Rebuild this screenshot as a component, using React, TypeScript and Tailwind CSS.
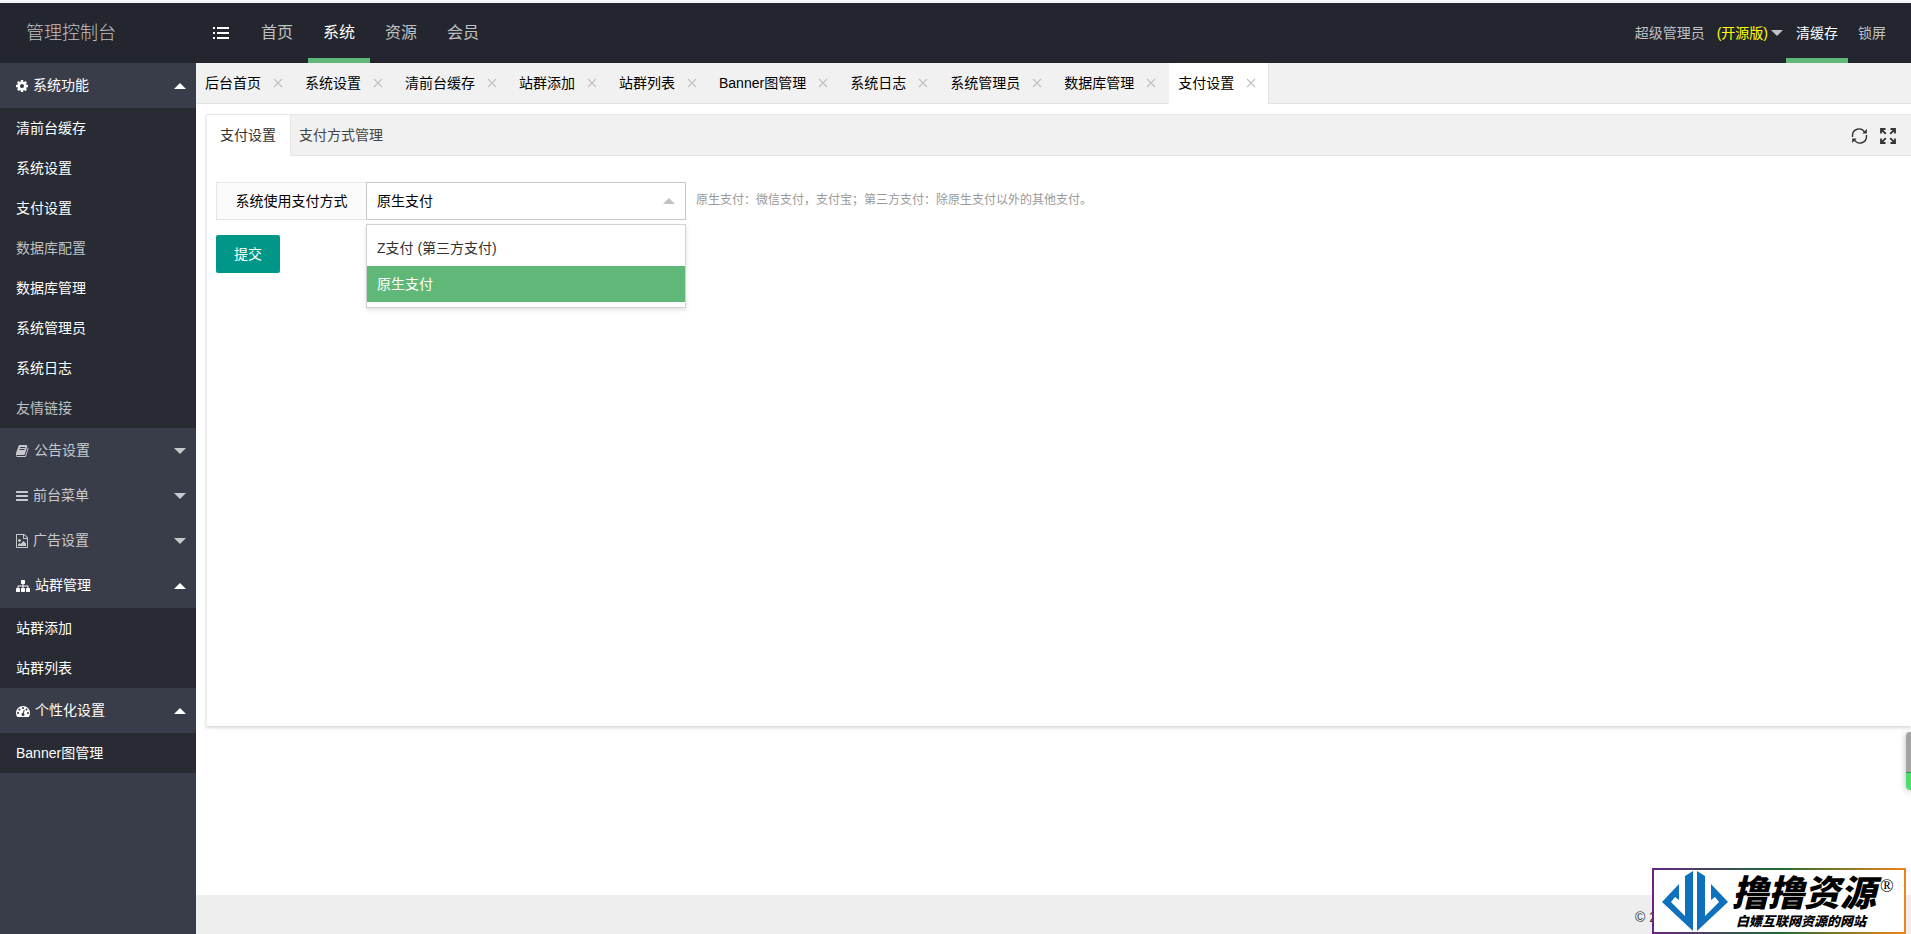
import React, { useState } from 'react';
import clsx from 'clsx';

interface IconDef {
  viewBox: string;
  width: string;
  path: string;
}

const icons: Record<string, IconDef> = {
  cog: {
    viewBox: '128 0 1536 1792',
    width: 'w-3',
    path: 'M1152 896q0-106-75-181t-181-75-181 75-75 181 75 181 181 75 181-75 75-181zm512-109v222q0 12-8 23t-20 13l-185 28q-19 54-39 91 35 50 107 138 10 12 10 25t-9 23q-27 37-99 108t-94 71q-12 0-26-9l-138-108q-44 23-91 38-16 136-29 186-7 28-36 28h-222q-14 0-24.500-8.500t-11.500-21.500l-28-184q-49-16-90-37l-141 107q-10 9-25 9-14 0-25-11-126-114-165-168-7-10-7-23 0-12 8-23 15-21 51-66.500t54-70.500q-27-50-41-99l-183-27q-13-2-21-12.500t-8-23.500v-222q0-12 8-23t19-13l186-28q14-46 39-92-40-57-107-138-10-12-10-24 0-10 9-23 26-36 98.500-107.500t94.500-71.500q13 0 26 10l138 107q44-23 91-38 16-136 29-186 7-28 36-28h222q14 0 24.500 8.500t11.500 21.500l28 184q49 16 90 37l142-107q9-9 24-9 13 0 25 10 129 119 165 170 7 8 7 22 0 12-8 23-15 21-51 66.500t-54 70.500q26 50 41 98l183 28q13 2 21 12.500t8 23.500z',
  },
  book: {
    viewBox: '64 0 1664 1792',
    width: 'w-[13px]',
    path: 'M1639 478q40 57 18 129l-275 906q-19 64-76.500 107.500t-122.500 43.500h-923q-77 0-148.500-53.500t-99.500-131.500q-24-67-2-127 0-4 3-27t4-37q1-8-3-21.500t-3-19.500q2-11 8-21t16.500-23.500 16.500-23.500q23-38 45-91.500t30-91.500q3-10 .5-30t-.5-28q3-11 17-28t17-23q21-36 42-92t25-90q1-9-2.500-32t.5-28q4-13 22-30.500t22-22.500q19-26 42.500-84.500t27.500-96.500q1-8-3-25.500t-2-26.500q2-8 9-18t18-23 17-21q8-12 16.500-30.500t15-35 16-36 19.500-32 26.500-23.500 36-11.500 47.500 5.500l-1 3q38-9 51-9h761q74 0 114 56t18 130l-274 906q-36 119-71.500 153.500t-128.500 34.500h-869q-27 0-38 15-11 16-1 43 24 70 144 70h923q29 0 56-15.500t35-41.500l300-987q7-22 5-57 38 15 59 43zm-1064 2q-4 13 2 22.500t20 9.500h608q13 0 25.500-9.500t16.500-22.500l21-64q4-13-2-22.500t-20-9.500h-608q-13 0-25.500 9.500t-16.500 22.500zm-83 256q-4 13 2 22.500t20 9.500h608q13 0 25.500-9.500t16.500-22.500l21-64q4-13-2-22.500t-20-9.500h-608q-13 0-25.500 9.500t-16.500 22.500z',
  },
  bars: {
    viewBox: '128 0 1536 1792',
    width: 'w-3',
    path: 'M1664 1344v128q0 26-19 45t-45 19h-1408q-26 0-45-19t-19-45v-128q0-26 19-45t45-19h1408q26 0 45 19t19 45zm0-512v128q0 26-19 45t-45 19h-1408q-26 0-45-19t-19-45v-128q0-26 19-45t45-19h1408q26 0 45 19t19 45zm0-512v128q0 26-19 45t-45 19h-1408q-26 0-45-19t-19-45v-128q0-26 19-45t45-19h1408q26 0 45 19t19 45z',
  },
  image: {
    viewBox: '128 0 1536 1792',
    width: 'w-3',
    path: 'M1596 380q28 28 48 76t20 88v1152q0 40-28 68t-68 28h-1344q-40 0-68-28t-28-68v-1600q0-40 28-68t68-28h896q40 0 88 20t76 48zm-444-244v376h376q-10-29-22-41l-313-313q-12-12-41-22zm384 1528v-1024h-416q-40 0-68-28t-28-68v-416h-768v1536h1280zm-128-448v320h-1024v-192l192-192 128 128 384-384zm-832-192q-80 0-136-56t-56-136 56-136 136-56 136 56 56 136-56 136-136 56z',
  },
  sitemap: {
    viewBox: '0 0 1792 1792',
    width: 'w-3.5',
    path: 'M1792 1248v320q0 40-28 68t-68 28h-320q-40 0-68-28t-28-68v-320q0-40 28-68t68-28h96v-192h-512v192h96q40 0 68 28t28 68v320q0 40-28 68t-68 28h-320q-40 0-68-28t-28-68v-320q0-40 28-68t68-28h96v-192h-512v192h96q40 0 68 28t28 68v320q0 40-28 68t-68 28h-320q-40 0-68-28t-28-68v-320q0-40 28-68t68-28h96v-192q0-52 38-90t90-38h512v-192h-96q-40 0-68-28t-28-68v-320q0-40 28-68t68-28h320q40 0 68 28t28 68v320q0 40-28 68t-68 28h-96v192h512q52 0 90 38t38 90v192h96q40 0 68 28t28 68z',
  },
  dashboard: {
    viewBox: '0 0 1792 1792',
    width: 'w-3.5',
    path: 'M384 1152q0-53-37.500-90.500t-90.500-37.500-90.500 37.500-37.500 90.500 37.500 90.500 90.500 37.500 90.500-37.500 37.500-90.500zm192-448q0-53-37.500-90.500t-90.500-37.500-90.500 37.500-37.500 90.500 37.500 90.500 90.500 37.500 90.500-37.500 37.500-90.500zm428 481l101-382q6-26-7.500-48.500t-38.500-29.500-48 6.500-30 39.500l-101 382q-60 5-107 43.500t-63 98.500q-20 77 20 146t117 89 146-20 89-117q16-60-6-117t-72-91zm660-33q0-53-37.500-90.500t-90.500-37.500-90.500 37.500-37.500 90.500 37.500 90.500 90.500 37.500 90.500-37.500 37.500-90.500zm-640-640q0-53-37.500-90.500t-90.500-37.500-90.500 37.500-37.500 90.500 37.500 90.500 90.500 37.500 90.500-37.500 37.500-90.500zm448 192q0-53-37.500-90.500t-90.500-37.500-90.500 37.500-37.500 90.500 37.500 90.500 90.500 37.500 90.500-37.500 37.500-90.500zm320 448q0 261-141 483-19 29-54 29h-1402q-35 0-54-29-141-221-141-483 0-182 71-348t191-286 286-191 348-71 348 71 286 191 191 286 71 348z',
  },
};

interface MenuGroup {
  title: string;
  icon: string;
  open: boolean;
  items: { label: string; dim?: boolean }[];
}

const menu: MenuGroup[] = [
  {
    title: '系统功能',
    icon: 'cog',
    open: true,
    items: [
      { label: '清前台缓存' },
      { label: '系统设置' },
      { label: '支付设置' },
      { label: '数据库配置', dim: true },
      { label: '数据库管理' },
      { label: '系统管理员' },
      { label: '系统日志' },
      { label: '友情链接', dim: true },
    ],
  },
  { title: '公告设置', icon: 'book', open: false, items: [] },
  { title: '前台菜单', icon: 'bars', open: false, items: [] },
  { title: '广告设置', icon: 'image', open: false, items: [] },
  { title: '站群管理', icon: 'sitemap', open: true, items: [{ label: '站群添加' }, { label: '站群列表' }] },
  { title: '个性化设置', icon: 'dashboard', open: true, items: [{ label: 'Banner图管理' }] },
];

const topNav = ['首页', '系统', '资源', '会员'];

const pageTabs = [
  '后台首页',
  '系统设置',
  '清前台缓存',
  '站群添加',
  '站群列表',
  'Banner图管理',
  '系统日志',
  '系统管理员',
  '数据库管理',
  '支付设置',
];

const payOptions = ['Z支付 (第三方支付)', '原生支付'];

const Caret: React.FC<{ up?: boolean; className?: string }> = ({ up, className }) => (
  <svg viewBox="0 0 12 6" className={clsx('h-1.5 w-3 shrink-0', className)} fill="currentColor" aria-hidden="true">
    <path d={up ? 'M0 6 6 0l6 6z' : 'M0 0l6 6 6-6z'} />
  </svg>
);

const MenuIcon: React.FC<{ name: string }> = ({ name }) => {
  const icon = icons[name];
  return (
    <svg viewBox={icon.viewBox} className={clsx('h-3.5 shrink-0', icon.width)} fill="currentColor" aria-hidden="true">
      <path d={icon.path} />
    </svg>
  );
};

const Header: React.FC = () => (
  <header className="flex h-[60px] shrink-0 bg-[#23262e] text-[#c0c1c4]">
    <div className="flex w-[196px] shrink-0 items-center pl-[26px] text-lg font-light">管理控制台</div>
    <button type="button" aria-label="折叠菜单" className="flex w-[50px] items-center justify-center text-white">
      <svg viewBox="0 0 16 12" className="h-3 w-4" fill="currentColor">
        <path d="M0 0h2v2H0zM4 0h12v2H4zM0 5h2v2H0zM4 5h12v2H4zM0 10h2v2H0zM4 10h12v2H4z" />
      </svg>
    </button>
    <nav className="flex text-base">
      {topNav.map((label) => (
        <a
          key={label}
          href="#"
          className={clsx(
            'flex items-center border-b-[5px] px-[15px] pt-[5px]',
            label === '系统' ? 'border-[#5fb878] text-white' : 'border-transparent'
          )}
        >
          {label}
        </a>
      ))}
    </nav>
    <div className="ml-auto flex pr-[15px]">
      <a href="#" className="flex items-center">
        超级管理员
        <span className="ml-3 text-[#ffff00]">(开源版)</span>
        <Caret className="mr-[3px] ml-[3px]" />
      </a>
      <a href="#" className="flex items-center border-b-[5px] border-[#5fb878] px-2.5 pt-[5px] text-white">
        清缓存
      </a>
      <a href="#" className="flex items-center px-2.5">
        锁屏
      </a>
    </div>
  </header>
);

const Sidebar: React.FC = () => (
  <aside className="w-[196px] shrink-0 bg-[#393d49]">
    {menu.map((group) => (
      <div key={group.title}>
        <button
          type="button"
          aria-expanded={group.open}
          className={clsx(
            'flex h-[45px] w-full items-center gap-[5px] pr-2.5 pl-4',
            group.open ? 'text-white' : 'text-[#c7c9ce]'
          )}
        >
          <MenuIcon name={group.icon} />
          <span className="pb-0.5">{group.title}</span>
          <Caret up={group.open} className="ml-auto" />
        </button>
        {group.open && (
          <ul className="bg-[#282b33]">
            {group.items.map((item) => (
              <li key={item.label}>
                <a href="#" className={clsx('flex h-10 items-center pl-4', item.dim ? 'text-[#bfc0c2]' : 'text-white')}>
                  {item.label}
                </a>
              </li>
            ))}
          </ul>
        )}
      </div>
    ))}
  </aside>
);

const PageTabs: React.FC = () => (
  <div className="flex h-[41px] shrink-0 bg-[#f1f1f1] shadow-[inset_0_-1px_0_#e2e2e2]">
    {pageTabs.map((label) => {
      const active = label === '支付设置';
      return (
        <div
          key={label}
          className={clsx(
            'flex items-center border-r pr-3 pb-0.5 pl-[9px]',
            active ? 'border-[#e2e2e2] bg-white' : 'border-transparent'
          )}
        >
          <button type="button" className="text-black">
            {label}
          </button>
          <button type="button" aria-label={`关闭${label}`} className="ml-3 text-[#c2c2c2]">
            <svg viewBox="0 0 10 10" className="size-2.5" fill="none" stroke="currentColor" strokeWidth="1.2">
              <path d="M1 1l8 8M9 1l-8 8" />
            </svg>
          </button>
        </div>
      );
    })}
  </div>
);

const PaySelect: React.FC = () => {
  const [open, setOpen] = useState(true);
  const [value, setValue] = useState('原生支付');

  return (
    <div className="relative w-80">
      <button
        id="pay-type"
        type="button"
        aria-haspopup="listbox"
        aria-expanded={open}
        onClick={() => setOpen(!open)}
        className="flex h-[38px] w-full items-center justify-between border border-[#c9c9c9] bg-white px-2.5 text-black"
      >
        {value}
        <Caret up={open} className="text-[#c2c2c2]" />
      </button>
      {open && (
        <ul
          role="listbox"
          className="absolute top-[42px] left-0 w-full border border-[#d2d2d2] bg-white py-[5px] shadow-[0_2px_4px_rgba(0,0,0,0.12)]"
        >
          {payOptions.map((option) => (
            <li
              key={option}
              role="option"
              aria-selected={option === value}
              onClick={() => setValue(option)}
              className={clsx(
                'flex h-9 cursor-pointer items-center px-2.5',
                option === value ? 'bg-[#5fb878] text-white' : 'text-[#333]'
              )}
            >
              {option}
            </li>
          ))}
        </ul>
      )}
    </div>
  );
};

const SettingsPanel: React.FC = () => (
  <section className="mt-2.5 ml-2.5 h-[612px] border-l border-[#eee] bg-white shadow-[0_2px_3px_rgba(0,0,0,0.15)]">
    <div className="flex h-[42px] border-y border-[#e6e6e6] bg-[#f1f1f1]">
      <button type="button" className="-mb-px border-r border-[#e6e6e6] bg-white pr-3.5 pb-px pl-[13px] text-[#333]">
        支付设置
      </button>
      <button type="button" className="px-2 text-[#444]">
        支付方式管理
      </button>
      <div className="ml-auto flex items-center gap-3 pt-0.5 pr-[15px] text-[#333]">
        <button type="button" aria-label="刷新">
          <svg viewBox="0 0 17 16" className="h-4 w-[17px]" fill="none" stroke="currentColor" strokeWidth="1.4">
            <path d="M1.500 9V7.500A6.500 6.500 0 0 1 13.500 4M15.500 7v1.500A6.500 6.500 0 0 1 3.500 12" />
            <path d="M15.800 1v4.500h-4.500zM1.200 15v-4.500h4.500z" fill="currentColor" stroke="none" />
          </svg>
        </button>
        <button type="button" aria-label="全屏">
          <svg viewBox="0 0 16 16" className="size-4" fill="none" stroke="currentColor" strokeWidth="1.800">
            <path d="M1 5.500V1h4.500M10.500 1H15v4.500M15 10.500V15h-4.500M5.500 15H1v-4.500M1 1l4.800 4.800M15 1l-4.800 4.800M15 15l-4.800-4.800M1 15l4.800-4.800" />
          </svg>
        </button>
      </div>
    </div>
    <form className="px-[9px] pt-[26px]" onSubmit={(e) => e.preventDefault()}>
      <div className="flex">
        <label
          htmlFor="pay-type"
          className="flex h-[38px] w-[150px] items-center justify-center border border-r-0 border-[#e6e6e6] bg-[#fbfbfb] text-black"
        >
          系统使用支付方式
        </label>
        <PaySelect />
        <p className="ml-2.5 pt-2 text-xs leading-5 text-[#999]">
          原生支付：微信支付，支付宝；第三方支付：除原生支付以外的其他支付。
        </p>
      </div>
      <button type="submit" className="mt-[15px] h-[38px] w-16 rounded-xs bg-[#009688] text-white">
        提交
      </button>
    </form>
  </section>
);

const BrandBadge: React.FC = () => (
  <div className="absolute right-[5px] bottom-0 flex h-[66px] w-[254px] bg-[linear-gradient(90deg,#6b2382,#1d6b35_50%,#f08519)] p-0.5">
    <div className="flex w-full bg-white">
      <svg viewBox="0 0 66 62" className="ml-2 h-[62px] w-[66px] shrink-0" fill="#0f70bb" aria-hidden="true">
        <path d="M31 1v60L0 32l17-18v16l-4-3-4 5 14 14V6z" />
        <path d="M35 1v60l31-29-17-18v16l4-3 4 5-14 14V6z" />
      </svg>
      <div className="ml-1 text-black">
        <div className="flex items-start gap-1 pt-1.5">
          <span className="text-4xl leading-9 font-black italic">撸撸资源</span>
          <span className="font-['Liberation_Serif',serif] text-lg leading-5">®</span>
        </div>
        <div className="mt-0.5 pl-1 text-[13px] leading-4 font-black italic">白嫖互联网资源的网站</div>
      </div>
    </div>
  </div>
);

const App: React.FC = () => (
  <div className="relative flex h-screen flex-col overflow-hidden border-t-[3px] border-[#f4f5f7] bg-white font-['Liberation_Sans','Noto_Sans_CJK_SC',sans-serif] text-sm">
    <Header />
    <div className="flex min-h-0 flex-1">
      <Sidebar />
      <main className="flex min-w-0 flex-1 flex-col">
        <PageTabs />
        <SettingsPanel />
        <footer className="mt-auto flex h-[39px] items-center justify-end bg-[#eee] pt-1 pr-[254px] text-[#333]">
          <span>© 2</span>
        </footer>
      </main>
    </div>
    <div className="absolute right-0 bottom-[144px] flex h-[58px] w-[5px] flex-col overflow-hidden rounded-l-sm shadow-[0_1px_6px_rgba(0,0,0,0.3)]">
      <span className="flex-1 bg-[#a3a3a3]" />
      <span className="h-[18px] border-t border-[#2c9a50] bg-[#4fdc6c]" />
    </div>
    <BrandBadge />
  </div>
);

export default App;
